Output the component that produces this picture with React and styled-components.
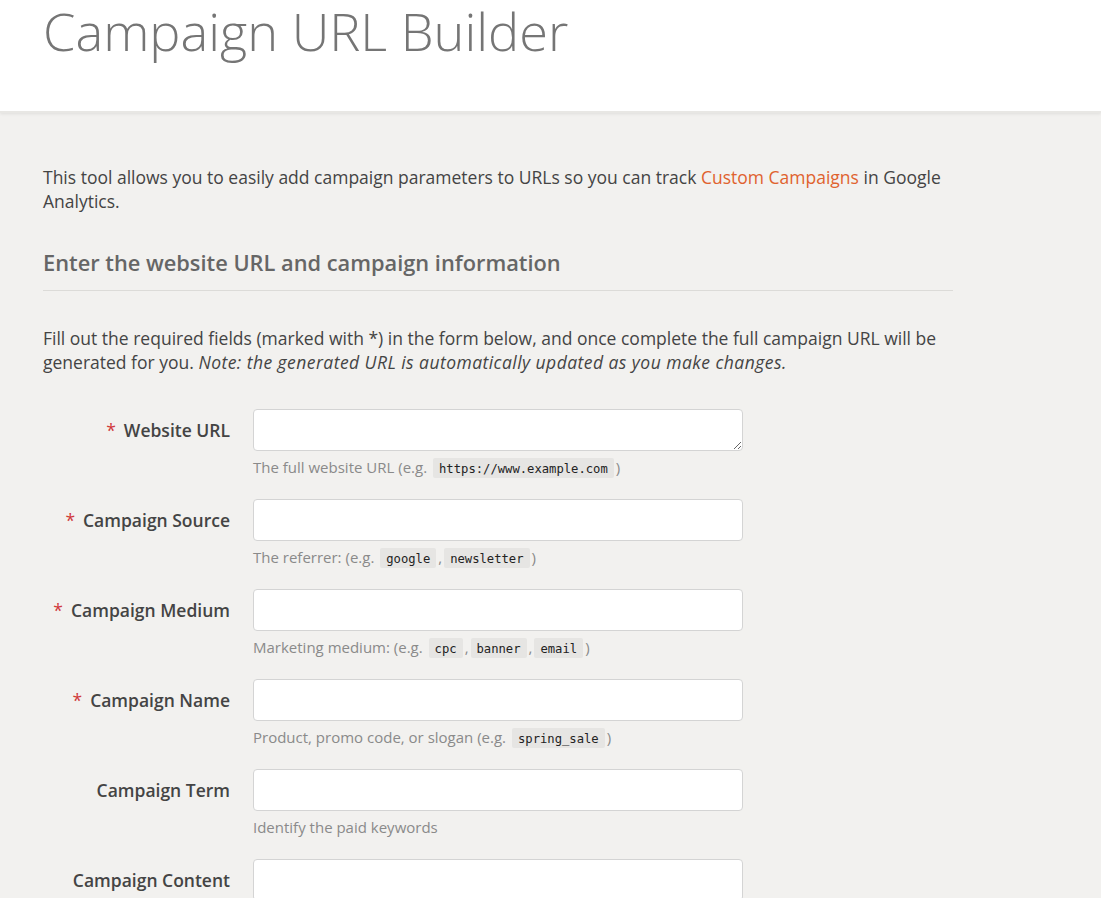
import React from 'react';
import styled, { createGlobalStyle } from 'styled-components';

const GlobalStyle = createGlobalStyle`
  html, body {
    margin: 0;
    padding: 0;
    background: #f2f1ef;
    font-family: 'Open Sans', 'Noto Sans', sans-serif;
    color: #444;
  }
`;

const Header = styled.header`
  background: #fff;
  height: 113px;
  box-sizing: border-box;
  padding: 5px 43px 0;
  box-shadow: 0 1px 3px rgba(0, 0, 0, 0.08);
  border-bottom: 2px solid #e8e7e4;
`;

const Title = styled.h1`
  margin: 0;
  font-size: 52.3px;
  line-height: 1;
  font-weight: 300;
  color: #757575;
`;

const Main = styled.main`
  width: 910px;
  padding: 52px 0 0 43px;
`;

const Intro = styled.p`
  margin: ${(p) => p.top || 0}px 0 ${(p) => p.gap || 0}px;
  font-size: 17.5px;
  line-height: 24px;
  color: #444;

  em {
    font-style: italic;
    letter-spacing: 0.45px;
  }
`;

const Link = styled.a`
  color: #e0622e;
  text-decoration: none;
`;

const SectionTitle = styled.h2`
  margin: 0;
  padding-bottom: 12px;
  font-size: 21.8px;
  line-height: 30px;
  font-weight: 600;
  color: #666;
  border-bottom: 1px solid #dcdbd8;
`;

const Form = styled.form`
  display: flex;
  flex-direction: column;
  margin-top: 35px;
`;

const Row = styled.div`
  display: grid;
  grid-template-columns: 187px 490px;
  column-gap: 23px;
  height: 90px;
`;

const Label = styled.label`
  text-align: right;
  font-size: 17.5px;
  font-weight: 600;
  color: #444;
  line-height: 42px;
  white-space: nowrap;
`;

const Star = styled.span`
  color: #d0393b;
  margin-right: 8px;
  font-weight: 400;
`;

const Field = styled.div`
  display: flex;
  flex-direction: column;
`;

const Input = styled.input`
  box-sizing: border-box;
  height: 42px;
  width: 100%;
  margin: 0;
  border: 1px solid #d4d4d4;
  border-radius: 4px;
  background: #fff;
  font: inherit;
  padding: 0 10px;
  outline: none;
`;

const TextArea = styled.textarea`
  box-sizing: border-box;
  display: block;
  height: 42px;
  width: 100%;
  margin: 0;
  border: 1px solid #d4d4d4;
  border-radius: 4px;
  background: #fff;
  font: inherit;
  padding: 6px 10px;
  resize: vertical;
  outline: none;
`;

const Hint = styled.div`
  margin-top: 6px;
  font-size: 15px;
  line-height: 20px;
  color: #8a8a8a;
  white-space: nowrap;
`;

const Code = styled.code`
  font-family: 'DejaVu Sans Mono', 'Liberation Mono', monospace;
  font-size: 12.2px;
  color: #222;
  background: #e6e5e3;
  padding: 4px 6px 2px;
  border-radius: 2px;
  margin: 0 2px;
`;

const fields = [
  {
    label: 'Website URL',
    required: true,
    multiline: true,
    hint: ['The full website URL (e.g.', ['https://www.example.com'], ')'],
  },
  {
    label: 'Campaign Source',
    required: true,
    hint: ['The referrer: (e.g.', ['google', 'newsletter'], ')'],
  },
  {
    label: 'Campaign Medium',
    required: true,
    hint: ['Marketing medium: (e.g.', ['cpc', 'banner', 'email'], ')'],
  },
  {
    label: 'Campaign Name',
    required: true,
    hint: ['Product, promo code, or slogan (e.g.', ['spring_sale'], ')'],
  },
  {
    label: 'Campaign Term',
    hint: ['Identify the paid keywords'],
  },
  {
    label: 'Campaign Content',
    hint: ['Use to differentiate ads'],
  },
];

const renderHint = ([before, codes, after]) => (
  <>
    {before}
    {codes && ' '}
    {codes &&
      codes.map((c, i) => (
        <React.Fragment key={c}>
          {i > 0 && ','}
          <Code>{c}</Code>
        </React.Fragment>
      ))}
    {after}
  </>
);

const App = () => (
  <>
    <GlobalStyle />
    <Header>
      <Title>Campaign URL Builder</Title>
    </Header>
    <Main>
      <Intro gap={35}>
        This tool allows you to easily add campaign parameters to URLs so you can
        track <Link href="#">Custom Campaigns</Link> in Google Analytics.
      </Intro>
      <SectionTitle>Enter the website URL and campaign information</SectionTitle>
      <Intro top={35}>
        Fill out the required fields (marked with *) in the form below, and once
        complete the full campaign URL will be generated for you.{' '}
        <em>Note: the generated URL is automatically updated as you make changes.</em>
      </Intro>
      <Form>
        {fields.map((f) => (
          <Row key={f.label}>
            <Label>
              {f.required && <Star>*</Star>}
              {f.label}
            </Label>
            <Field>
              {f.multiline ? <TextArea rows={1} /> : <Input type="text" />}
              <Hint>{renderHint(f.hint)}</Hint>
            </Field>
          </Row>
        ))}
      </Form>
    </Main>
  </>
);

export default App;
